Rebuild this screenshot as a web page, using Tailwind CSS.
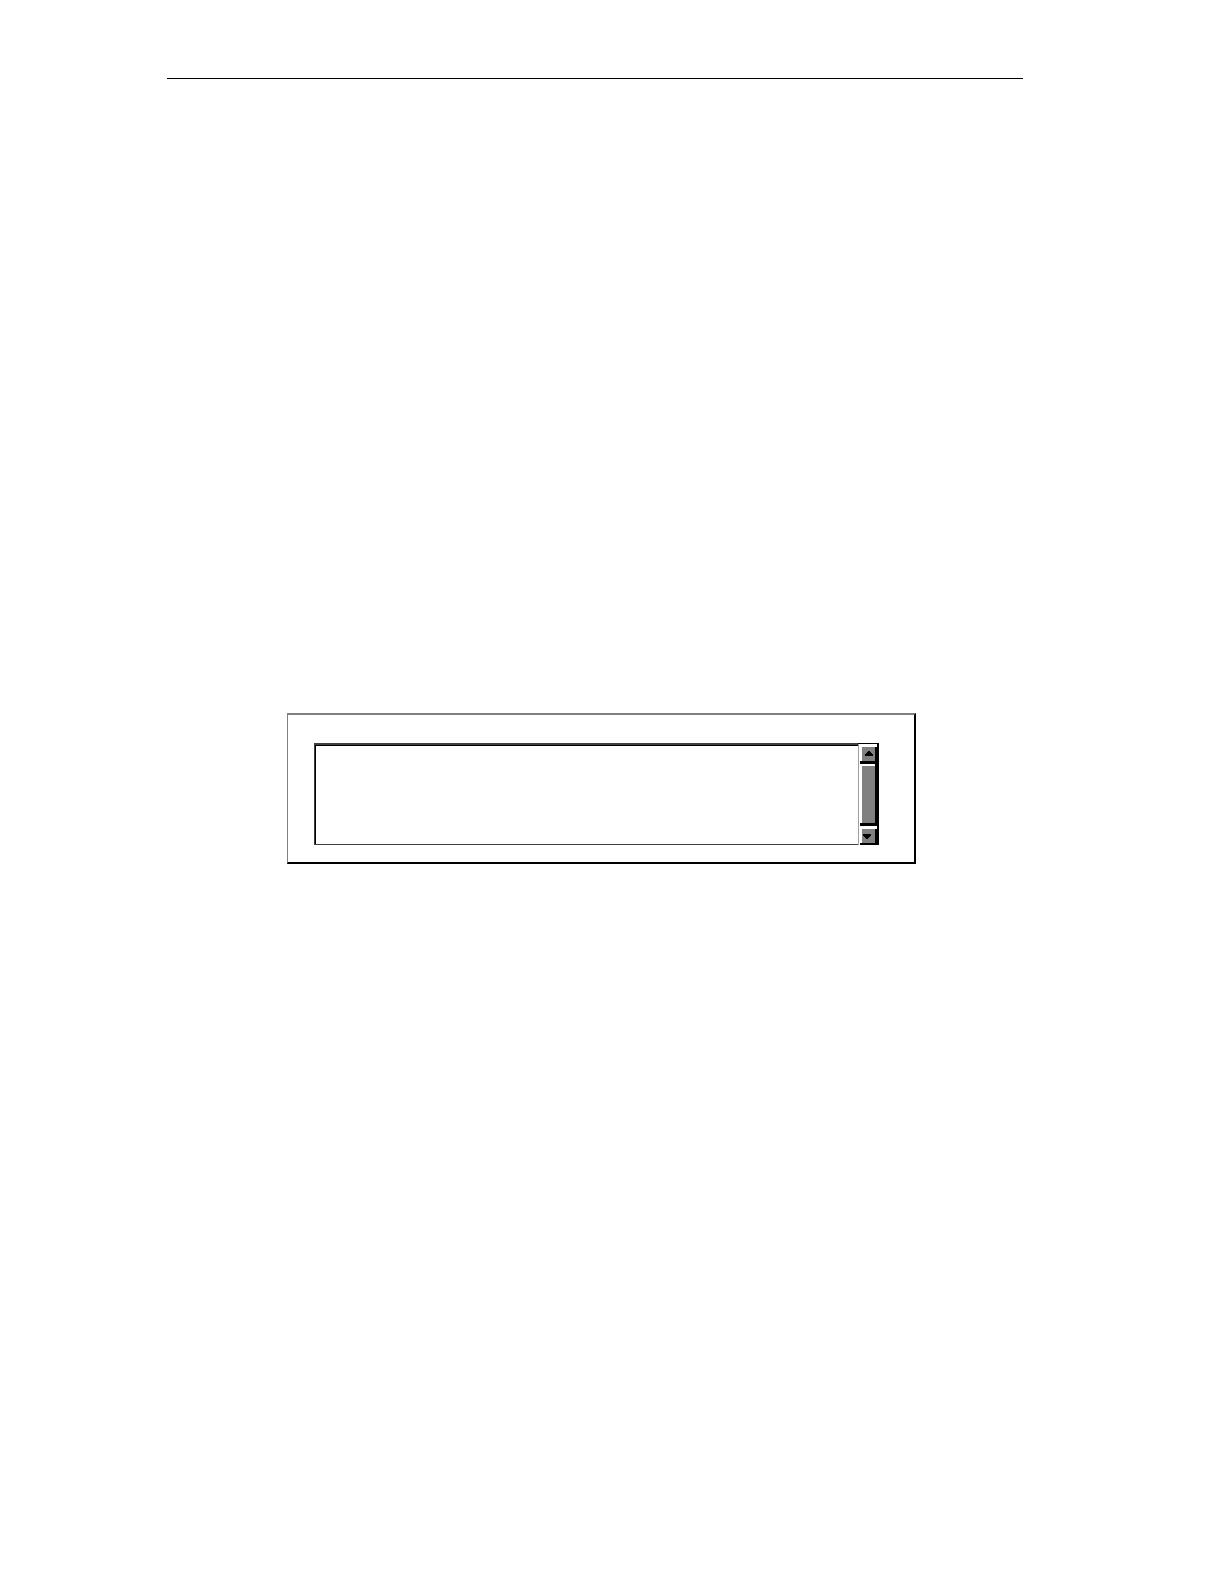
<!DOCTYPE html>
<html lang="en">
<head>
<meta charset="utf-8">
<meta name="viewport" content="width=device-width, initial-scale=1">
<title>Scrolling text field</title>
<script src="https://cdn.jsdelivr.net/npm/@tailwindcss/browser@4"></script>
</head>
<body class="min-h-screen bg-white font-['Liberation_Sans',sans-serif]">
<main class="flex flex-col pt-[78px] pr-[201px] pl-[167px]">
  <hr class="border-0 border-t border-black">
  <section class="mt-[634px] mr-[107px] ml-[120px] border-t-2 border-r-2 border-b-2 border-l border-t-[#808080] border-r-black border-b-black border-l-[#808080] pt-7 pr-[35px] pb-[17px] pl-[26px]">
    <div class="flex h-[102px]">
      <div class="flex min-w-0 flex-1 border-t-2 border-b border-l border-[#404040]">
        <textarea aria-label="Text" class="block w-full resize-none overflow-hidden border-t border-l border-black bg-white p-1 text-sm outline-none"></textarea>
      </div>
      <div class="flex w-[21px] flex-col border-t border-black bg-white">
        <div class="flex flex-1 flex-col border-l border-[#a0a0a0] pl-px">
          <div class="flex flex-1 flex-col bg-black">
            <button type="button" aria-label="Scroll up" class="flex h-5 w-full flex-col border-b-3 border-black">
              <span class="mr-0.5 h-[3px] self-stretch bg-white"></span>
              <span class="mr-1 flex flex-1 items-center justify-center self-stretch border-l-2 border-white bg-[#808080]">
                <svg class="h-2 w-3" viewBox="0 0 12 8" shape-rendering="crispEdges" aria-hidden="true"><path d="M5 1h2v1h1v1h1v1h1v2H2V4h1V3h1V2h1z"/></svg>
              </span>
            </button>
            <div class="flex flex-1 flex-col border-b-3 border-black">
              <div class="mr-1 h-0.5 bg-white"></div>
              <div class="mr-1 flex-1 border-l-2 border-white bg-[#808080]"></div>
            </div>
            <button type="button" aria-label="Scroll down" class="flex h-[19px] w-full flex-col border-b-2 border-black">
              <span class="mr-0.5 h-[3px] self-stretch bg-white"></span>
              <span class="mr-1 flex flex-1 items-center justify-start self-stretch border-l-2 border-white bg-[#808080]">
                <svg class="h-2 w-3" viewBox="0 0 12 8" shape-rendering="crispEdges" aria-hidden="true"><path d="M1 2h8v2H8v1H7v1H6v1H4V6H3V5H2V4H1z"/></svg>
              </span>
            </button>
          </div>
        </div>
      </div>
    </div>
  </section>
</main>
</body>
</html>
